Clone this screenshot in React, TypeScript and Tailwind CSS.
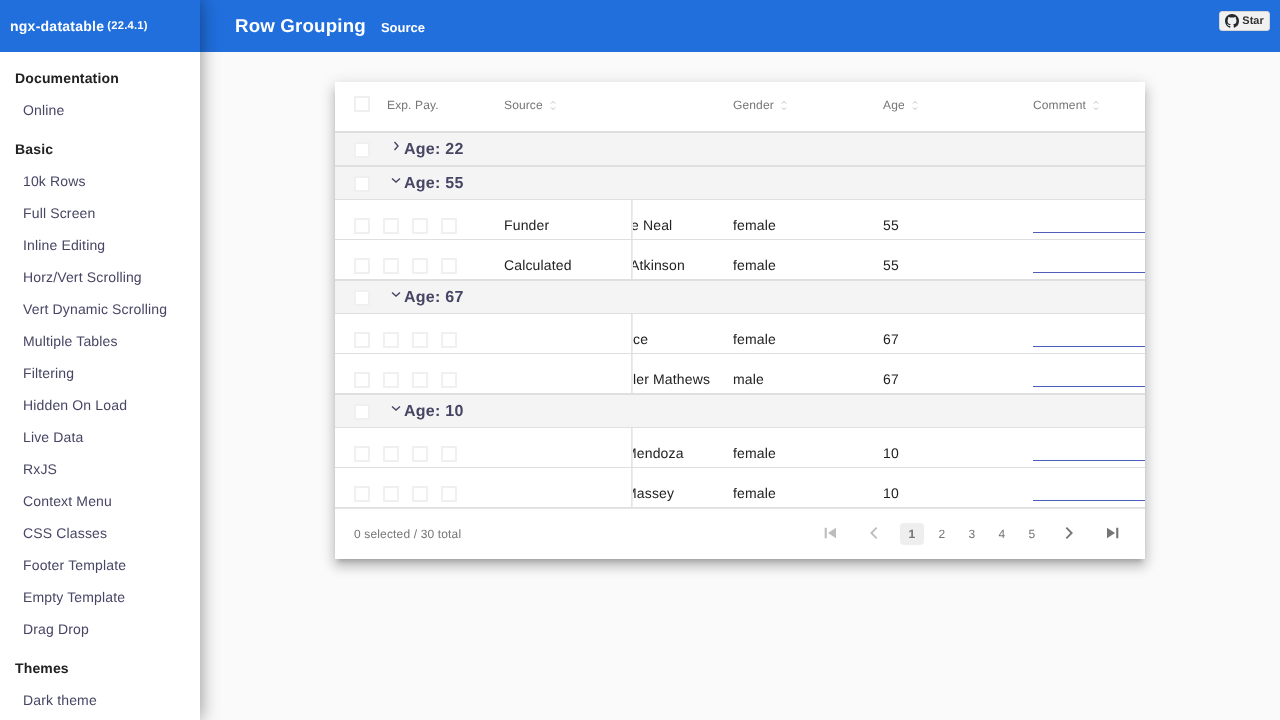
import React from 'react';

const NAV: { title: string; items: string[] }[] = [
  { title: 'Documentation', items: ['Online'] },
  {
    title: 'Basic',
    items: [
      '10k Rows',
      'Full Screen',
      'Inline Editing',
      'Horz/Vert Scrolling',
      'Vert Dynamic Scrolling',
      'Multiple Tables',
      'Filtering',
      'Hidden On Load',
      'Live Data',
      'RxJS',
      'Context Menu',
      'CSS Classes',
      'Footer Template',
      'Empty Template',
      'Drag Drop',
    ],
  },
  { title: 'Themes', items: ['Dark theme'] },
];

type Row = { source: string; name: string; clip: string; gender: string; age: number };
type Group = { age: number; open: boolean; rows: Row[] };

const GROUPS: Group[] = [
  { age: 22, open: false, rows: [] },
  {
    age: 55,
    open: true,
    rows: [
      { source: 'Funder', name: 'e Neal', clip: 'ml-[-1px]', gender: 'female', age: 55 },
      { source: 'Calculated', name: 'Atkinson', clip: 'ml-[-2px]', gender: 'female', age: 55 },
    ],
  },
  {
    age: 67,
    open: true,
    rows: [
      { source: '', name: 'ce', clip: 'ml-px', gender: 'female', age: 67 },
      { source: '', name: 'ler Mathews', clip: 'ml-px', gender: 'male', age: 67 },
    ],
  },
  {
    age: 10,
    open: true,
    rows: [
      { source: '', name: 'Mendoza', clip: 'ml-[-7px]', gender: 'female', age: 10 },
      { source: '', name: 'Massey', clip: 'ml-[-7px]', gender: 'female', age: 10 },
    ],
  },
];

const Check: React.FC<{ fill?: boolean }> = ({ fill }) => (
  <span className={`block w-4 h-4 shrink-0 border-2 border-[#f0f0f0] ${fill ? 'bg-white' : ''}`} />
);

const SortIcon = () => (
  <svg width="6" height="11" viewBox="0 0 6 11" fill="none" stroke="#bdbdbd" strokeWidth="1" className="ml-[7px] mt-px">
    <path d="M1 3.5 3 1.5 5 3.5" />
    <path d="M1 7.5 3 9.5 5 7.5" />
  </svg>
);

const HeaderCell: React.FC<{ label: string; className: string }> = ({ label, className }) => (
  <div className={`flex items-center ${className}`}>
    {label}
    <SortIcon />
  </div>
);

const PageIcon: React.FC<{ d: string; color: string; fill?: boolean }> = ({ d, color, fill }) => (
  <span className="w-6 h-[22px] flex items-center justify-center">
    <svg
      width="16"
      height="16"
      viewBox="0 0 12 12"
      className="mb-[2px]"
      fill={fill ? color : 'none'}
      stroke={fill ? 'none' : color}
      strokeWidth={fill ? 0 : 1.4}
    >
      <path d={d} />
    </svg>
  </span>
);

const GroupRow: React.FC<{ group: Group }> = ({ group }) => (
  <div className="h-[34px] flex bg-[#f4f4f4] border-y border-[#dfdfdf] pl-[19px]">
    <div className="mt-[9px]">
      <Check fill />
    </div>
    <svg width="10" height="10" viewBox="0 0 10 10" fill="none" stroke="#474564" strokeWidth="1.4" className="ml-[21px] mt-2">
      {group.open ? <path d="M1 3.5 5 7 9 3.5" /> : <path d="M3.5 1 7 5 3.5 9" />}
    </svg>
    <span className="ml-[3px] mt-[5px] text-[16px] leading-[24px] font-bold tracking-[0.25px] text-[#474564]">
      Age: {group.age}
    </span>
  </div>
);

const DataRow: React.FC<{ row: Row }> = ({ row }) => (
  <div className="h-10 flex border-b border-[#dfdfdf] bg-white text-[14px] tracking-[0.15px] text-[#212121]">
    <div className="relative z-[1] w-[297px] shrink-0 flex pl-[19px] pt-[18px] border-r border-[#e4e4e4] shadow-[1px_0_0_#ececec]">
      <div className="flex gap-[13px]">
        <Check />
        <Check />
        <Check />
        <Check />
      </div>
      <span className="ml-[47px] mt-[-1px] leading-4">{row.source}</span>
    </div>
    <div className="w-[101px] shrink-0 overflow-hidden whitespace-nowrap pt-[17px] leading-4">
      <div className={row.clip}>{row.name}</div>
    </div>
    <div className="w-[150px] shrink-0 pt-[17px] leading-4">{row.gender}</div>
    <div className="w-[150px] shrink-0 pt-[17px] leading-4">{row.age}</div>
    <div className="flex-1 pt-[32px]">
      <div className="h-px bg-[#4c5fb8]" />
    </div>
  </div>
);

export default function App() {
  return (
    <div className="flex h-[720px] overflow-hidden bg-[#fafafa] font-['Liberation_Sans',Arial,sans-serif] [text-rendering:geometricPrecision] will-change-transform">
      <aside className="relative z-10 w-[200px] shrink-0 bg-white shadow-[0_0_18px_rgba(0,0,0,0.45)]">
        <div className="h-[52px] flex items-center pl-[10px] bg-[#206fdd] text-white font-bold text-[14px] tracking-[0.25px]">
          ngx-datatable
          <small className="ml-[3px] text-[11.2px]">(22.4.1)</small>
        </div>
        <nav className="pt-[10px]">
          {NAV.map((section, i) => (
            <div key={section.title} className={i > 0 ? 'mt-[7px]' : ''}>
              <h3 className="h-8 pl-[15px] flex items-center text-[14px] font-bold tracking-[0.15px] text-[#212121]">
                {section.title}
              </h3>
              <ul>
                {section.items.map((item) => (
                  <li key={item} className="h-8 pl-[23px] flex items-center text-[14px] tracking-[0.15px] text-[#474564]">
                    {item}
                  </li>
                ))}
              </ul>
            </div>
          ))}
        </nav>
      </aside>

      <main className="flex-1 min-w-0 flex flex-col">
        <header className="h-[52px] shrink-0 flex bg-[#206fdd] text-white pl-[35px] pr-[10px]">
          <h1 className="text-[18.72px] leading-[52px] font-bold tracking-[0.17px]">Row Grouping</h1>
          <a className="ml-[15px] text-[13px] leading-[55px] font-bold">Source</a>
          <div className="ml-auto mt-[11px] h-5 w-[51px] flex items-center justify-center gap-[3px] rounded-[3px] border border-[#d5d5d5] bg-[#f1f1f1] text-[11px] font-bold text-[#333]">
            <svg width="14" height="14" viewBox="0 0 16 16" fill="#24292e">
              <path d="M8 0C3.58 0 0 3.58 0 8c0 3.54 2.29 6.53 5.47 7.59.4.07.55-.17.55-.38 0-.19-.01-.82-.01-1.49-2.01.37-2.53-.49-2.69-.94-.09-.23-.48-.94-.82-1.13-.28-.15-.68-.52-.01-.53.63-.01 1.08.58 1.23.82.72 1.21 1.87.87 2.33.66.07-.52.28-.87.51-1.07-1.78-.2-3.64-.89-3.64-3.95 0-.87.31-1.59.82-2.15-.08-.2-.36-1.02.08-2.12 0 0 .67-.21 2.2.82.64-.18 1.32-.27 2-.27.68 0 1.36.09 2 .27 1.53-1.04 2.2-.82 2.2-.82.44 1.1.16 1.92.08 2.12.51.56.82 1.27.82 2.15 0 3.07-1.87 3.75-3.65 3.95.29.25.54.73.54 1.48 0 1.07-.01 1.93-.01 2.2 0 .21.15.46.55.38A8.013 8.013 0 0016 8c0-4.42-3.58-8-8-8z" />
            </svg>
            Star
          </div>
        </header>

        <div className="pt-[30px] px-[135px]">
          <div className="bg-white overflow-hidden shadow-[0_5px_5px_-3px_rgba(0,0,0,0.2),0_8px_10px_1px_rgba(0,0,0,0.14),0_3px_14px_2px_rgba(0,0,0,0.12)]">
            {/* Table header */}
            <div className="h-[50px] flex items-center border-b border-[#dfdfdf] pl-[19px] text-[12px] tracking-[0.13px] text-[#757575]">
              <div className="mt-[-6px]">
                <Check />
              </div>
              <span className="ml-[17px] w-[117px] mt-[-4px]">Exp. Pay.</span>
              <HeaderCell label="Source" className="w-[229px] mt-[-4px]" />
              <HeaderCell label="Gender" className="w-[150px] mt-[-4px]" />
              <HeaderCell label="Age" className="w-[150px] mt-[-4px]" />
              <HeaderCell label="Comment" className="mt-[-4px]" />
            </div>

            {/* Grouped body */}
            {GROUPS.map((group) => (
              <div key={group.age}>
                <GroupRow group={group} />
                {group.rows.map((row) => (
                  <DataRow key={row.name} row={row} />
                ))}
              </div>
            ))}

            {/* Footer */}
            <div className="h-[51px] flex items-center justify-between border-t border-[#e6e6e6] pl-[19px] pr-[20px] text-[12px] tracking-[0.15px] text-[#757575]">
              <span>0 selected / 30 total</span>
              <div className="flex items-center">
                <PageIcon d="M2 2h1.6v8H2zM10.5 2v8L4.5 6z" color="#bdbdbd" fill />
                <span className="w-5" />
                <PageIcon d="M8 2 4 6l4 4" color="#bdbdbd" />
                <span className="w-[14px]" />
                <span className="w-6 h-[22px] flex items-center justify-center rounded bg-[#eeeeee] font-bold">1</span>
                {[2, 3, 4, 5].map((p) => (
                  <span key={p} className="ml-[6px] w-6 h-[22px] flex items-center justify-center">
                    {p}
                  </span>
                ))}
                <span className="w-[13px]" />
                <PageIcon d="M4 2l4 4-4 4" color="#757575" />
                <span className="w-5" />
                <PageIcon d="M1.5 2v8l6-4zM8.4 2H10v8H8.4z" color="#757575" fill />
              </div>
            </div>
          </div>
        </div>
      </main>
    </div>
  );
}
